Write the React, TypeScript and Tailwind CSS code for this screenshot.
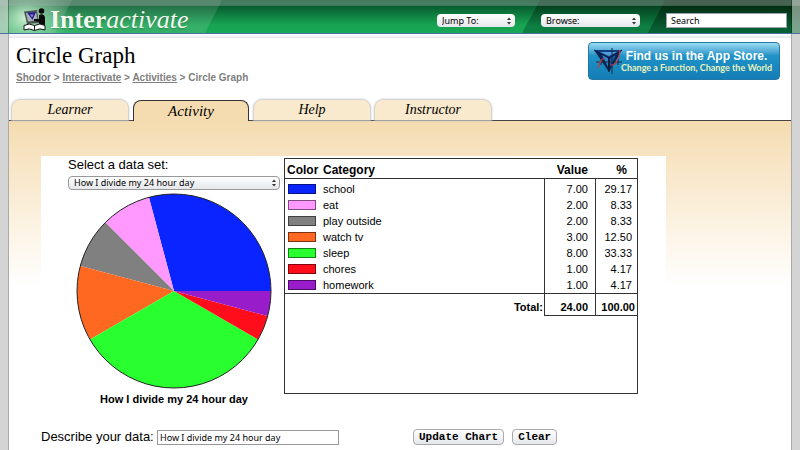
import { useState } from "react";
import clsx from "clsx";

const dataSets = [
  {
    name: "How I divide my 24 hour day",
    rows: [
      { category: "school", value: 7, color: "#0a24ff" },
      { category: "eat", value: 2, color: "#ff99ff" },
      { category: "play outside", value: 2, color: "#808080" },
      { category: "watch tv", value: 3, color: "#ff6820" },
      { category: "sleep", value: 8, color: "#29ff2e" },
      { category: "chores", value: 1, color: "#ff0d1b" },
      { category: "homework", value: 1, color: "#981cc9" },
    ],
  },
];

const tabs = ["Learner", "Activity", "Help", "Instructor"];

function HeaderBackdrop() {
  return (
    <svg className="absolute inset-0 size-full" viewBox="0 0 800 34" preserveAspectRatio="none" aria-hidden="true">
      <defs>
        <linearGradient id="mid" x1="0" y1="0" x2="0" y2="1">
          <stop offset="0.1" stopColor="#04522a" />
          <stop offset="0.75" stopColor="#18a352" />
          <stop offset="1" stopColor="#18a855" />
        </linearGradient>
        <linearGradient id="browse" x1="0" y1="0" x2="0" y2="1">
          <stop offset="0.1" stopColor="#043a1c" />
          <stop offset="0.8" stopColor="#0d7f42" />
        </linearGradient>
        <linearGradient id="search" x1="0" y1="0" x2="0" y2="1">
          <stop offset="0.1" stopColor="#02280f" />
          <stop offset="0.9" stopColor="#076033" />
        </linearGradient>
        <radialGradient id="glow" gradientUnits="userSpaceOnUse" cx="26" cy="18" r="46" gradientTransform="translate(0 4) scale(1 0.8)">
          <stop offset="0" stopColor="#d9f6dc" stopOpacity="0.95" />
          <stop offset="0.45" stopColor="#a5e0b5" stopOpacity="0.5" />
          <stop offset="1" stopColor="#a5e0b5" stopOpacity="0" />
        </radialGradient>
      </defs>
      <rect width="800" height="34" fill="url(#mid)" />
      <path d="M0 0H222L205 34H0Z" fill="#fff" fillOpacity="0.12" />
      <path d="M0 0H72L55 34H0Z" fill="#fff" fillOpacity="0.12" />
      <path d="M540 0H800V34H522Z" fill="url(#browse)" />
      <path d="M665 0H800V34H648Z" fill="url(#search)" />
      <rect width="90" height="34" fill="url(#glow)" />
      <rect width="800" height="6" fill="#a3b5ab" fillOpacity="0.42" />
    </svg>
  );
}

function ReaderLogo() {
  return (
    <svg className="size-6" viewBox="0 0 24 24" aria-hidden="true">
      <path d="M1 3.500L14 2L16 15L4 16Z" fill="#4c5651" />
      <path d="M3 5L13 4L14.500 12.500L5 13.500Z" fill="#a9b2bb" />
      <path d="M4 4.500L13 4L9.500 12Z" fill="#28208c" />
      <path d="M7 6.500L10.500 6.500L9 9.500Z" fill="#8d87dd" />
      <circle cx="18.500" cy="3" r="2.800" fill="#0b0b0b" />
      <path d="M16 7Q21 5 22 9V20H16V14L11 13V11L16 11Z" fill="#0b0b0b" />
      <path d="M1 17.500Q6 14.500 11.500 17.500Q17 14.500 22 17.500V22Q17 19.500 11.500 22.500Q6 19.500 1 22Z" fill="#fff" stroke="#111" strokeWidth="1" />
      <path d="M11.500 17.500V22.500" stroke="#111" strokeWidth="1" />
    </svg>
  );
}

function Stepper() {
  return (
    <svg className="pointer-events-none absolute right-1 top-1/2 h-2 w-1 -translate-y-1/2" viewBox="0 0 4 8" aria-hidden="true">
      <path d="M2 0.500L4 3H0ZM2 7.500L4 5H0Z" fill="#333" />
    </svg>
  );
}

function MenuSelect({ label, options, className }: { label: string; options: string[]; className: string }) {
  return (
    <span className={clsx("relative block", className)}>
      <select
        aria-label={label}
        className="block h-[13px] w-full appearance-none rounded-sm bg-linear-to-b from-white to-gray-200 pl-[5px] text-[9px] leading-[13px] text-black"
      >
        {options.map((option) => (
          <option key={option}>{option}</option>
        ))}
      </select>
      <Stepper />
    </span>
  );
}

function AppStoreBanner() {
  return (
    <a
      href="#app-store"
      className="flex h-[38px] w-48 items-center overflow-hidden rounded border border-[#2379a6] bg-linear-to-b from-[#9adcf2] via-[#1f93c8] via-35% to-[#147db5] whitespace-nowrap"
    >
      <svg className="ml-1 h-7 w-8 shrink-0" viewBox="0 0 32 28" aria-hidden="true">
        <path d="M1 3H29L16 25Z" fill="#0a2453" />
        <path d="M1 3H29L16 11Z" fill="#123f83" />
        <path d="M7 5H24L16 9Z" fill="#4d9fdc" />
        <path d="M9 8L15 11V20Z" fill="#2f87cc" />
        <path d="M23 8L17 11V20Z" fill="#1b5ca6" />
        <path d="M1 3L16 11V25M29 3L16 11" fill="none" stroke="#07183c" strokeWidth="1" />
        <path d="M19 1V27M3 15H29M8 11V18M25 12V18" stroke="#19293f" strokeWidth="1" />
        <path d="M5 21Q8 10 12 12M18 18Q25 19 27 3" fill="none" stroke="#b93c4a" strokeWidth="1.300" />
      </svg>
      <span className="-ml-1 flex flex-col items-center">
        <span className="font-['Liberation_Sans',sans-serif] text-[12px] leading-[13px] font-bold text-white">Find us in the App Store.</span>
        <span className="font-[Lato,sans-serif] text-[9px] leading-[10px] font-bold text-[#e6f3bb]">Change a Function, Change the World</span>
      </span>
    </a>
  );
}

function PieChart({ rows }: { rows: { category: string; value: number; color: string }[] }) {
  const total = rows.reduce((sum, row) => sum + row.value, 0);
  const point = (v: number) => {
    const angle = (v / total) * Math.PI * 2;
    return `${98 + 97 * Math.cos(angle)} ${98 - 97 * Math.sin(angle)}`;
  };
  let start = 0;
  return (
    <svg className="mx-auto size-[196px]" viewBox="0 0 196 196" role="img" aria-label="Circle graph">
      {rows.map((row) => {
        const from = start;
        start += row.value;
        return (
          <path
            key={row.category}
            d={`M98 98L${point(from)}A97 97 0 ${row.value / total > 0.5 ? 1 : 0} 0 ${point(start)}Z`}
            fill={row.color}
          />
        );
      })}
      <circle cx="98" cy="98" r="97" fill="none" stroke="#222" strokeWidth="1" />
    </svg>
  );
}

function DataTable({ rows }: { rows: { category: string; value: number; color: string }[] }) {
  const total = rows.reduce((sum, row) => sum + row.value, 0);
  return (
    <div className="mt-[2px] h-[236px] flex-1 border border-[#333]">
      <table className="w-full table-fixed border-separate border-spacing-0 text-[11px] leading-4">
        <colgroup>
          <col className="w-[38px]" />
          <col />
          <col className="w-[51px]" />
          <col className="w-[42px]" />
        </colgroup>
        <thead className="text-[12px]">
          <tr className="h-5">
            <th className="border-b border-[#333] pt-[3px] pl-[2px] text-left whitespace-nowrap">Color</th>
            <th className="border-b border-[#333] pt-[3px] text-left">Category</th>
            <th className="border-b border-[#333] pt-[3px] pr-[7px] text-right">Value</th>
            <th className="border-b border-[#333] pt-[3px] pr-[10px] text-right">%</th>
          </tr>
        </thead>
        <tbody>
          <tr className="h-[2px]" aria-hidden="true">
            <td colSpan={2} className="p-0" />
            <td className="border-l border-[#333] p-0" />
            <td className="border-l border-[#333] p-0" />
          </tr>
          {rows.map((row) => (
            <tr key={row.category}>
              <td className="pl-[3px]">
                <span className="block h-[10px] w-7 border border-black/50" style={{ backgroundColor: row.color }} />
              </td>
              <td>{row.category}</td>
              <td className="border-l border-[#333] pr-[7px] text-right">{row.value.toFixed(2)}</td>
              <td className="border-l border-[#333] pr-[5px] text-right">{((row.value / total) * 100).toFixed(2)}</td>
            </tr>
          ))}
        </tbody>
        <tfoot className="font-bold">
          <tr className="h-[23px]">
            <td colSpan={2} className="border-t border-[#333] pt-1 pr-px text-right">
              Total:
            </td>
            <td className="border-t border-b border-l border-[#333] pt-1 pr-[7px] text-right">{total.toFixed(2)}</td>
            <td className="border-t border-b border-l border-[#333] pt-1 pr-[2px] text-right">100.00</td>
          </tr>
        </tfoot>
      </table>
    </div>
  );
}

export default function App() {
  const [activeTab, setActiveTab] = useState("Activity");
  const [selected, setSelected] = useState(dataSets[0].name);
  const [description, setDescription] = useState(dataSets[0].name);
  const [title, setTitle] = useState(dataSets[0].name);
  const dataSet = dataSets.find((d) => d.name === selected) || dataSets[0];

  return (
    <div className="flex min-h-screen flex-col bg-[#d4d4d4] font-['Liberation_Sans',Arial,sans-serif] text-black">
      <header className="relative flex h-[34px] border-b border-[#4a6fa0]">
        <HeaderBackdrop />
        <div className="relative w-2 bg-[#c8d2cc]/60" />
        <div className="relative flex flex-1 items-center justify-between border-x border-black/30 pr-1 pl-[14px] font-['Noto_Sans',sans-serif]">
          <a href="#home" className="flex items-center gap-[3px] pt-[6px] font-['Liberation_Serif',serif] text-[26px] leading-7 text-[#f4f8ee] text-shadow-sm">
            <ReaderLogo />
            <span>
              <b>Inter</b>
              <i>activate</i>
            </span>
          </a>
          <div className="flex items-center gap-[26px] pt-2">
            <MenuSelect label="Jump To" options={["Jump To:"]} className="w-[78px]" />
            <MenuSelect label="Browse" options={["Browse:"]} className="w-[99px]" />
            <input
              aria-label="Search"
              defaultValue="Search"
              className="h-[15px] w-[121px] border border-gray-400 bg-white px-1 text-[9px] leading-3"
            />
          </div>
        </div>
        <div className="relative w-2 bg-[#c8d2cc]/60" />
      </header>

      <main className="mx-2 flex-1 border-x border-[#aaa] bg-white">
        <div className="h-1 bg-linear-to-b from-white to-gray-200" />
        <div className="flex items-start justify-between pt-1 pr-[11px] pb-4 pl-[7px]">
          <div>
            <h1 className="font-['Liberation_Serif',serif] text-[23px] leading-7">Circle Graph</h1>
            <nav aria-label="Breadcrumb" className="pt-[2px] text-[10px] leading-3 font-bold text-[#808080]">
              <a href="#shodor" className="underline">Shodor</a> &gt; <a href="#interactivate" className="underline">Interactivate</a> &gt;{" "}
              <a href="#activities" className="underline">Activities</a> &gt; Circle Graph
            </nav>
          </div>
          <AppStoreBanner />
        </div>

        <nav aria-label="Sections" className="flex items-end gap-[5px] border-b border-[#444] pl-[3px] font-['Liberation_Serif',serif] italic">
          {tabs.map((tab) => (
            <button
              key={tab}
              onClick={() => setActiveTab(tab)}
              className={clsx(
                "w-[116px] rounded-t-lg text-center leading-5 italic",
                tab === activeTab
                  ? "-mb-px h-[21px] border border-b-0 border-[#333] bg-[#f5dcb0] text-[15px]"
                  : "h-5 bg-[#f9e9cd] text-[14px] shadow-[0_0_2px_1px_#c4c4c4]",
              )}
            >
              {tab}
            </button>
          ))}
        </nav>

        <div className="bg-linear-to-b from-[#f5dcb0] to-white to-[165px] pt-[35px] pb-1 pl-8">
          <div className="w-full max-w-[625px] bg-white">
            <div className="flex items-start gap-1 pr-7 pl-[27px]">
              <div className="w-[212px]">
                <label htmlFor="data-set" className="block pt-px text-[13px] leading-4">
                  Select a data set:
                </label>
                <span className="relative mt-[3px] block">
                  <select
                    id="data-set"
                    value={selected}
                    onChange={(e) => {
                      setSelected(e.target.value);
                      setDescription(e.target.value);
                    }}
                    className="block h-[14px] w-full appearance-none rounded-sm border border-[#999] bg-linear-to-b from-white to-gray-200 pl-[5px] font-['Noto_Sans',sans-serif] text-[9px] leading-3"
                  >
                    {dataSets.map((d) => (
                      <option key={d.name}>{d.name}</option>
                    ))}
                  </select>
                  <Stepper />
                </span>
                <div className="pt-[3px]">
                  <PieChart rows={dataSet.rows} />
                </div>
                <p className="pt-1 text-center text-[11px] leading-3 font-bold">{title}</p>
              </div>
              <DataTable rows={dataSet.rows} />
            </div>

            <form
              className="flex items-center pt-6"
              onSubmit={(e) => {
                e.preventDefault();
                setTitle(description);
              }}
            >
              <label htmlFor="description" className="w-[116px] text-[13px] leading-4 whitespace-nowrap">
                Describe your data:
              </label>
              <input
                id="description"
                value={description}
                onChange={(e) => setDescription(e.target.value)}
                className="h-[15px] w-[182px] border border-[#999] px-[2px] font-['Noto_Sans',sans-serif] text-[9px] leading-3"
              />
              <div className="ml-[74px] flex gap-2 font-['Liberation_Mono',monospace] text-[11px] leading-[14px] font-bold">
                <button type="submit" className="rounded-sm border border-[#aaa] bg-linear-to-b from-white to-gray-200 px-[5px]">
                  Update Chart
                </button>
                <button
                  type="button"
                  onClick={() => setDescription("")}
                  className="rounded-sm border border-[#aaa] bg-linear-to-b from-white to-gray-200 px-[5px]"
                >
                  Clear
                </button>
              </div>
            </form>
          </div>
        </div>
      </main>
    </div>
  );
}
